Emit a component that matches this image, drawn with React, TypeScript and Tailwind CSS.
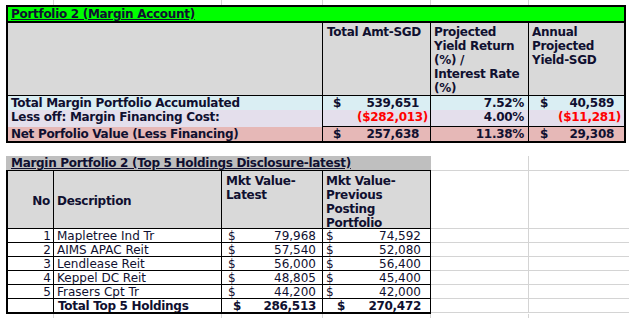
import React from "react";

// Excel-style sheet: two bordered tables over light gridlines
const grid = "border-[#d4d4d4]";

const holdings = [
  { no: 1, name: "Mapletree Ind Tr", latest: "79,968", prev: "74,592" },
  { no: 2, name: "AIMS APAC Reit", latest: "57,540", prev: "52,080" },
  { no: 3, name: "Lendlease Reit", latest: "56,000", prev: "56,400" },
  { no: 4, name: "Keppel DC Reit", latest: "48,805", prev: "45,400" },
  { no: 5, name: "Frasers Cpt Tr", latest: "44,200", prev: "42,000" },
];

function GridStrip({ h }: { h: string }) {
  return (
    <div className={`flex ${h}`}>
      <div className={`w-[54px] border-r ${grid}`} />
      <div className={`w-[168px] border-r ${grid}`} />
      <div className={`w-[101px] border-r ${grid}`} />
      <div className={`w-[108px] border-r ${grid}`} />
      <div className={`w-[98px] border-r ${grid}`} />
      <div className="flex-1" />
    </div>
  );
}

function GhostRow({ h }: { h: string }) {
  return (
    <div className={`flex border-b ${grid} ${h}`}>
      <div className={`w-[98px] border-r ${grid}`} />
    </div>
  );
}

function Money({ value, pl, pr, bold }: { value: string; pl: string; pr: string; bold?: boolean }) {
  return (
    <div className={`flex justify-between ${pl} ${pr} ${bold ? "font-bold tracking-[-0.3px]" : ""}`}>
      <span>$</span>
      <span>{value}</span>
    </div>
  );
}

function SummaryTable() {
  const cols = "grid grid-cols-[315px_108px_98px_1fr]";
  return (
    <div className="ml-[6px] w-[620px] border-2 border-black font-bold tracking-[-0.3px]">
      <div className="h-[16px] bg-[#00ff00] border-b-2 border-black pl-[3px] leading-[15px] underline">
        Portfolio 2 (Margin Account)
      </div>

      <div className={`${cols} h-[73px] bg-[#d9d9d9] border-b border-black leading-[14px]`}>
        <div className="border-r border-black" />
        <div className="border-r border-black pt-[2px] pl-[4px]">Total Amt-SGD</div>
        <div className="border-r border-black pt-[2px] pl-[3px]">
          <div>Projected</div>
          <div>Yield Return</div>
          <div>(%) /</div>
          <div>Interest Rate</div>
          <div>(%)</div>
        </div>
        <div className="pt-[2px] pl-[3px]">
          <div>Annual</div>
          <div>Projected</div>
          <div>Yield-SGD</div>
        </div>
      </div>

      <div className={`${cols} h-[14px] bg-[#daeef3] leading-[15px] overflow-hidden`}>
        <div className="border-r border-black pl-[3px]">Total Margin Portfolio Accumulated</div>
        <div className="border-r border-b border-black">
          <Money value="539,651" pl="pl-[10px]" pr="pr-[11px]" bold />
        </div>
        <div className="border-r border-b border-black text-right pr-[4px]">7.52%</div>
        <div className="border-b border-black">
          <Money value="40,589" pl="pl-[11px]" pr="pr-[10px]" bold />
        </div>
      </div>

      <div className={`${cols} h-[17px] bg-[#e4dfec] leading-[15px] overflow-hidden`}>
        <div className="border-r border-black pl-[3px]">Less off: Margin Financing Cost:</div>
        <div className="border-r border-b border-black text-right pr-[2px] text-[#ff0000]">($282,013)</div>
        <div className="border-r border-b border-black text-right pr-[4px]">4.00%</div>
        <div className="border-b border-black text-right pr-[3px] text-[#ff0000]">($11,281)</div>
      </div>

      <div className={`${cols} h-[14px] bg-[#e6b8b7] leading-[15px] overflow-hidden`}>
        <div className="border-r border-black pl-[3px]">Net Porfolio Value (Less Financing)</div>
        <div className="border-r border-black">
          <Money value="257,638" pl="pl-[10px]" pr="pr-[11px]" bold />
        </div>
        <div className="border-r border-black text-right pr-[4px]">11.38%</div>
        <div>
          <Money value="29,308" pl="pl-[11px]" pr="pr-[10px]" bold />
        </div>
      </div>
    </div>
  );
}

function HoldingsTable() {
  const cols = "grid grid-cols-[46px_168px_101px_107px]";
  return (
    <div className="w-[425px]">
      <div className="h-[14px] bg-[#bfbfbf] pl-[5px] leading-[15px] font-bold tracking-[-0.3px] underline">
        Margin Portfolio 2 (Top 5 Holdings Disclosure-latest)
      </div>
      <div className="border-l-2 border-t border-r border-b-2 border-black">
        <div className={`${cols} h-[58px] bg-[#d9d9d9] border-b border-black font-bold tracking-[-0.3px] leading-[14px]`}>
          <div className="border-r border-black flex items-center justify-end pr-[3px]">No</div>
          <div className="border-r border-black flex items-center pl-[3px]">Description</div>
          <div className="border-r border-black pt-[3px] pl-[4px]">
            <div>Mkt Value-</div>
            <div>Latest</div>
          </div>
          <div className="pt-[3px] pl-[3px]">
            <div>Mkt Value-</div>
            <div>Previous</div>
            <div>Posting</div>
            <div>Portfolio</div>
          </div>
        </div>

        {holdings.map((h) => (
          <div key={h.no} className={`${cols} h-[14px] border-b border-black leading-[15px] overflow-hidden`}>
            <div className="border-r border-black text-right pr-[2px]">{h.no}</div>
            <div className="border-r border-black pl-[3px]">{h.name}</div>
            <div className="border-r border-black">
              <Money value={h.latest} pl="pl-[6px]" pr="pr-[6px]" />
            </div>
            <Money value={h.prev} pl="pl-[3px]" pr="pr-[9px]" />
          </div>
        ))}

        <div className={`${cols} h-[13px] leading-[15px] overflow-hidden font-bold tracking-[-0.3px]`}>
          <div className="border-r border-black" />
          <div className="border-r border-black pl-[4px]">Total Top 5 Holdings</div>
          <div className="border-r border-black">
            <Money value="286,513" pl="pl-[11px]" pr="pr-[6px]" />
          </div>
          <Money value="270,472" pl="pl-[14px]" pr="pr-[9px]" />
        </div>
      </div>
    </div>
  );
}

export default function App() {
  return (
    <div className="w-[629px] h-[318px] overflow-hidden bg-white text-[12px] text-[#101030] [font-family:'DejaVu_Sans',sans-serif]">
      <GridStrip h="h-[5px]" />
      <SummaryTable />
      <div className="h-[13px]" />
      <div className="flex">
        <div className="w-[6px]" />
        <HoldingsTable />
        <div className="flex-1">
          <GhostRow h="h-[15px]" />
          <GhostRow h="h-[58px]" />
          <GhostRow h="h-[14px]" />
          <GhostRow h="h-[14px]" />
          <GhostRow h="h-[14px]" />
          <GhostRow h="h-[14px]" />
          <GhostRow h="h-[14px]" />
          <GhostRow h="h-[14px]" />
        </div>
      </div>
      <GridStrip h="h-[5px]" />
    </div>
  );
}
